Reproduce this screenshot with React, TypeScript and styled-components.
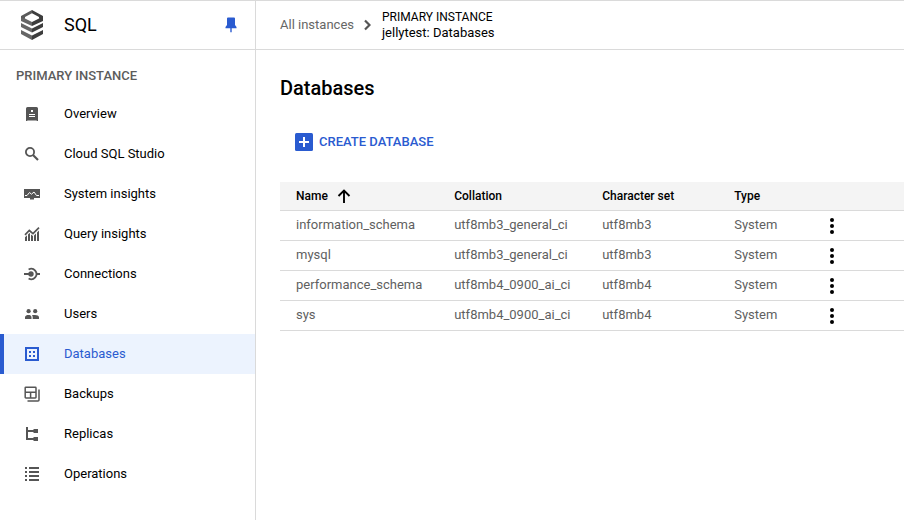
import React from "react";
import styled, { createGlobalStyle } from "styled-components";

const GlobalStyle = createGlobalStyle`
  * { box-sizing: border-box; }
  body { margin: 0; background: #fff; overflow: hidden; }
`;

const blue = "#2a5bd0";
const line = "#dadada";

const Page = styled.div`
  display: grid;
  grid-template-columns: 256px 1fr;
  height: 520px;
  border-top: 1px solid ${line};
  font-family: Roboto, "Liberation Sans", sans-serif;
  font-size: 13px;
  color: #000;
`;

const Sidebar = styled.aside`
  border-right: 1px solid ${line};
`;

const ProductBar = styled.header`
  display: flex;
  align-items: center;
  height: 49px;
  padding: 0 18px 0 20px;
  border-bottom: 1px solid ${line};
`;

const ProductName = styled.div`
  flex: 1;
  margin-left: 20px;
  font-size: 18px;
  line-height: 24px;
`;

const SectionTitle = styled.div`
  height: 44px;
  padding: 16px 16px 0;
  font-size: 13px;
  font-weight: 500;
  line-height: 20px;
  color: #5c5c5c;
`;

const NavItem = styled.a<{ $active?: boolean }>`
  display: flex;
  align-items: center;
  gap: 24px;
  height: 40px;
  padding-left: ${(p) => (p.$active ? 20 : 24)}px;
  border-left: ${(p) => (p.$active ? `4px solid ${blue}` : "0")};
  background: ${(p) => (p.$active ? "#ecf3fe" : "transparent")};
  color: ${(p) => (p.$active ? blue : "#000")};

  svg { color: ${(p) => (p.$active ? blue : "#555")}; }
`;

const Label = styled.span`
  line-height: 16px;
`;

const Icon = styled.svg`
  display: block;
  flex: none;
  fill: currentColor;
`;

const Main = styled.main`
  min-width: 0;
`;

const Breadcrumbs = styled.header`
  display: flex;
  align-items: center;
  height: 49px;
  padding-left: 24px;
  border-bottom: 1px solid ${line};
`;

const ParentCrumb = styled.a`
  color: #666;
  line-height: 16px;
  margin-right: 10px;
`;

const CurrentCrumb = styled.div`
  margin-left: 11px;
  font-size: 12px;
  line-height: 16px;
`;

const CrumbName = styled.div`
  font-size: 13px;
`;

const Heading = styled.h1`
  margin: 0;
  padding: 24px 24px 0;
  font-size: 20px;
  font-weight: 500;
  line-height: 28px;
`;

const CreateButton = styled.button`
  display: flex;
  align-items: center;
  gap: 6px;
  height: 36px;
  margin: 22px 0 22px 39px;
  padding: 0;
  border: 0;
  background: none;
  color: ${blue};
  font: 500 13px Roboto, sans-serif;
`;

const Table = styled.div`
  margin-left: 24px;
`;

const Row = styled.div<{ $head?: boolean }>`
  display: grid;
  grid-template-columns: 158.2px 148px 132px 91.8px 1fr;
  align-items: center;
  height: ${(p) => (p.$head ? 29 : 30)}px;
  padding: 0 0 ${(p) => (p.$head ? 0 : 2)}px 16px;
  border-bottom: 1px solid ${line};
  background: ${(p) => (p.$head ? "#f4f4f4" : "#fff")};
  color: ${(p) => (p.$head ? "#000" : "#5f5f5f")};
  font-size: ${(p) => (p.$head ? 12 : 13)}px;
  font-weight: ${(p) => (p.$head ? 500 : 400)};
  line-height: 16px;
`;

const Cell = styled.div`
  display: flex;
  align-items: center;
  gap: 9px;
  white-space: nowrap;
`;

const MenuButton = styled.button`
  display: flex;
  width: 12px;
  height: 20px;
  margin-top: 2px;
  padding: 0;
  border: 0;
  background: none;
  color: #000;
`;

const icons: Record<string, React.ReactNode> = {
  Overview: (
    <path fillRule="evenodd" d="M3.5 1h9A1.5 1.5 0 0 1 14 2.500V15h-1l-.5-.5h-9L3 15H2V2.500A1.500 1.500 0 0 1 3.500 1ZM7 4v2h2V4ZM5 8v1h6V8Zm0 2v1h6v-1Z" />
  ),
  "Cloud SQL Studio": (
    <g fill="none" stroke="currentColor">
      <circle cx="6" cy="6" r="4.100" strokeWidth="1.800" />
      <path d="m9 9 5 5" strokeWidth="2.100" />
    </g>
  ),
  "System insights": (
    <>
      <path d="M0 3h16v9h-6v1.500H6V12H0Z" />
      <path d="M1 9.500h2l2.500-3 2 1.700L10 6l2.500 3.500H15" fill="none" stroke="#fff" strokeWidth="1" />
    </>
  ),
  "Query insights": (
    <>
      <path d="M1 11.200 3 9.300V15H1Zm3-2.800L5.500 7 6 7.500V15H4Zm3 0L9 10v5H7Zm3 1L12 7.500V15h-2Zm3-3 2-2V15h-2Z" />
      <path d="M1 8.800 5.300 4.500 9 7.700l6-6" fill="none" stroke="currentColor" strokeWidth="1.700" />
    </>
  ),
  Connections: (
    <>
      <circle cx="7" cy="8" r="2.700" />
      <path d="M0 8h6M12.500 8H16" stroke="currentColor" strokeWidth="1.800" />
      <path d="M4.600 3.500A5.200 5.200 0 1 1 4.600 12.500" fill="none" stroke="currentColor" strokeWidth="1.800" />
    </>
  ),
  Users: (
    <>
      <circle cx="4.600" cy="5.200" r="2.100" />
      <circle cx="11.200" cy="5.200" r="2.100" />
      <path d="M1 13v-1.800C1 9.500 3 9 4.500 9s3 .5 3 2.200V13Zm7.700 0v-1.800c0-.9-.3-1.500-.8-2 .9-.2 2-.3 3.100-.2 2 .1 4 .7 4 2.200V13Z" />
    </>
  ),
  Databases: (
    <path fillRule="evenodd" d="M1 1h14v14H1Zm2 2v10h10V3Zm2 2h2v2H5Zm4 0h2v2H9ZM5 9h2v2H5Zm4 0h2v2H9Z" />
  ),
  Backups: (
    <g fill="none" stroke="currentColor" strokeWidth="1.500">
      <rect x="1.200" y="1.200" width="10.800" height="10.800" rx=".7" />
      <path d="M1.200 6.200H12M6.600 6.200V12M15 3.500V14a1 1 0 0 1-1 1H3.500" />
    </g>
  ),
  Replicas: (
    <path d="M2 1h2v3h5.500V3H14v4H9.500V6H4v6h5.500v-1H14v4H9.500v-1H2Z" />
  ),
  Operations: (
    <path d="M1 1h2v2H1Zm4 0h10v2H5ZM1 5h2v2H1Zm4 0h10v2H5ZM1 9h2v2H1Zm4 0h10v2H5ZM1 13h2v2H1Zm4 0h10v2H5Z" />
  ),
};

const rows = [
  ["information_schema", "utf8mb3_general_ci", "utf8mb3"],
  ["mysql", "utf8mb3_general_ci", "utf8mb3"],
  ["performance_schema", "utf8mb4_0900_ai_ci", "utf8mb4"],
  ["sys", "utf8mb4_0900_ai_ci", "utf8mb4"],
];

const SqlLogo = () => (
  <Icon width="24" height="32" viewBox="0 0 24 32">
    <path d="M1 7v5l11 5v-4L5 9.500Z" fill="#666" />
    <path d="M23 7v5l-11 5v-4l7-3.500Z" fill="#3d3d3d" />
    <path d="M12 1 1 7v2l4 .8V8l7-3.700Z" fill="#5a5a5a" />
    <path d="m12 1 11 6v2l-4 .8V8l-7-3.700Z" fill="#3d3d3d" />
    <path d="m1 14 11 5.500v4L1 18Zm0 7 11 5.500V31L1 25Z" fill="#666" />
    <path d="m23 14-11 5.500v4L23 18Zm0 7-11 5.500V31l11-6Z" fill="#3d3d3d" />
  </Icon>
);

export default function App() {
  return (
    <>
      <GlobalStyle />
      <Page>
        <Sidebar>
          <ProductBar>
            <SqlLogo />
            <ProductName>SQL</ProductName>
            <Icon width="12" height="16" viewBox="0 0 12 16" color={blue}>
              <path d="M2 1.500Q2 .5 3 .5h6q1 0 1 1V8l1.500 2v1.300H.5V10L2 8Z" />
              <path d="M5.300 11h1.400v4L6 15.500 5.300 15Z" />
            </Icon>
          </ProductBar>
          <SectionTitle>PRIMARY INSTANCE</SectionTitle>
          <nav>
            {Object.entries(icons).map(([label, drawing]) => (
              <NavItem key={label} $active={label === "Databases"}>
                <Icon width="16" height="16" viewBox="0 0 16 16">{drawing}</Icon>
                <Label>{label}</Label>
              </NavItem>
            ))}
          </nav>
        </Sidebar>
        <Main>
          <Breadcrumbs>
            <ParentCrumb>All instances</ParentCrumb>
            <Icon width="7" height="12" viewBox="0 0 7 12" color="#555">
              <path d="m1 1.500 4.500 4.500L1 10.500" fill="none" stroke="currentColor" strokeWidth="2.200" />
            </Icon>
            <CurrentCrumb>
              PRIMARY INSTANCE
              <CrumbName>jellytest: Databases</CrumbName>
            </CurrentCrumb>
          </Breadcrumbs>
          <Heading>Databases</Heading>
          <CreateButton>
            <Icon width="18" height="18" viewBox="0 0 18 18">
              <rect width="18" height="18" rx="1.500" />
              <path d="M9 4v10M4 9h10" stroke="#fff" strokeWidth="2" />
            </Icon>
            <Label>CREATE DATABASE</Label>
          </CreateButton>
          <Table>
            <Row $head>
              <Cell>
                Name
                <Icon width="14" height="14" viewBox="0 0 14 14">
                  <path d="M7 14V2M1.500 7 7 1.500 12.500 7" fill="none" stroke="currentColor" strokeWidth="1.900" />
                </Icon>
              </Cell>
              <Cell>Collation</Cell>
              <Cell>Character set</Cell>
              <Cell>Type</Cell>
            </Row>
            {rows.map(([name, collation, charset]) => (
              <Row key={name}>
                <Cell>{name}</Cell>
                <Cell>{collation}</Cell>
                <Cell>{charset}</Cell>
                <Cell>System</Cell>
                <MenuButton aria-label="Actions">
                  <Icon width="12" height="20" viewBox="0 0 12 20">
                    <circle cx="6" cy="4" r="2" />
                    <circle cx="6" cy="10" r="2" />
                    <circle cx="6" cy="16" r="2" />
                  </Icon>
                </MenuButton>
              </Row>
            ))}
          </Table>
        </Main>
      </Page>
    </>
  );
}
